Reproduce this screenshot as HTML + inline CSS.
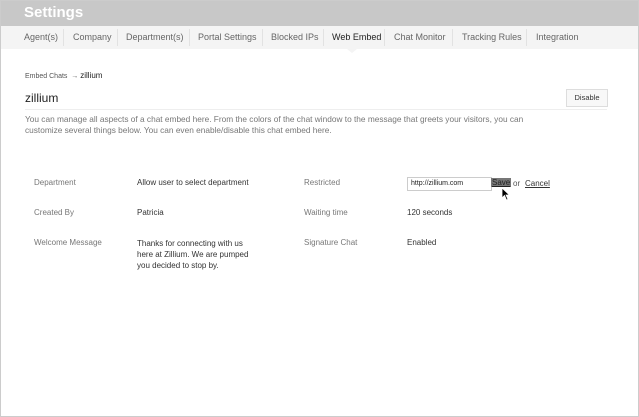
<!DOCTYPE html>
<html><head><style>
body{margin:0;width:639px;height:417px;overflow:hidden;background:#fff;font-family:"Liberation Sans",sans-serif;position:relative}
.frame{position:absolute;left:0;top:0;width:637px;height:415px;border:1px solid #ccc}
.hdr{position:absolute;left:0;top:0;width:639px;height:26px;background:#c8c8c8}
.hdr span{position:absolute;left:24px;top:4px;color:#fff;font-size:15px;font-weight:bold}
.tabs{position:absolute;left:0;top:26px;width:639px;height:23px;background:#f4f4f4}
.tabs span{position:absolute;top:6px;font-size:9px;color:#666}
.sep{position:absolute;top:3px;width:1px;height:17px;background:#e2e2e2}
.t{position:absolute;font-size:8px;color:#777}
.v{position:absolute;font-size:8px;color:#333}
</style></head><body>
<div class="hdr"><span>Settings</span></div>
<div class="tabs">
<span style="left:24px">Agent(s)</span><div class="sep" style="left:63px"></div>
<span style="left:73px">Company</span><div class="sep" style="left:117px"></div>
<span style="left:126px">Department(s)</span><div class="sep" style="left:189px"></div>
<span style="left:198px">Portal Settings</span><div class="sep" style="left:262px"></div>
<span style="left:271px">Blocked IPs</span><div class="sep" style="left:323px"></div>
<span style="left:332px;color:#222">Web Embed</span><div class="sep" style="left:384px"></div>
<span style="left:394px">Chat Monitor</span><div class="sep" style="left:452px"></div>
<span style="left:462px">Tracking Rules</span><div class="sep" style="left:526px"></div>
<span style="left:536px">Integration</span>
</div>
<div style="position:absolute;left:347px;top:49px;width:0;height:0;border-left:5px solid transparent;border-right:5px solid transparent;border-top:4px solid #f4f4f4"></div>
<div style="position:absolute;left:25px;top:71px;font-size:7px;color:#555">Embed Chats &nbsp;→ <span style="font-size:8px;color:#222">zillium</span></div>
<div style="position:absolute;left:25px;top:91px;font-size:12px;color:#222">zillium</div>
<div style="position:absolute;left:566px;top:89px;width:40px;height:16px;border:1px solid #ddd;background:#f8f8f8;font-size:7.5px;color:#333;text-align:center;line-height:16px">Disable</div>
<div style="position:absolute;left:25px;top:109px;width:582px;height:1px;background:#eee"></div>
<div style="position:absolute;left:25px;top:114px;font-size:8.3px;color:#777;line-height:11px">You can manage all aspects of a chat embed here. From the colors of the chat window to the message that greets your visitors, you can<br>customize several things below. You can even enable/disable this chat embed here.</div>
<div class="t" style="left:34px;top:178px">Department</div>
<div class="v" style="left:137px;top:178px">Allow user to select department</div>
<div class="t" style="left:34px;top:208px">Created By</div>
<div class="v" style="left:137px;top:208px">Patricia</div>
<div class="t" style="left:34px;top:238px">Welcome Message</div>
<div class="v" style="left:137px;top:238px;line-height:11px">Thanks for connecting with us<br>here at Zillium. We are pumped<br>you decided to stop by.</div>
<div class="t" style="left:304px;top:178px">Restricted</div>
<div style="position:absolute;left:407px;top:177px;width:80px;height:12px;border:1px solid #ccc;font-size:7px;color:#222;line-height:12px;padding-left:3px">http://zillium.com</div>
<div style="position:absolute;left:491px;top:178px;font-size:8px;color:#222;background:#777;text-decoration:underline;padding:0 1px">Save</div>
<div style="position:absolute;left:513px;top:179px;font-size:8px;color:#555">or</div>
<div style="position:absolute;left:525px;top:179px;font-size:8px;color:#333;text-decoration:underline">Cancel</div>
<svg style="position:absolute;left:501px;top:187px" width="10" height="14"><path d="M1 1 L1 11 L3.5 8.5 L5.5 13 L7 12.3 L5 8 L8.5 8 Z" fill="#000" stroke="#fff" stroke-width="0.8"/></svg>
<div class="t" style="left:304px;top:208px">Waiting time</div>
<div class="v" style="left:407px;top:208px">120 seconds</div>
<div class="t" style="left:304px;top:238px">Signature Chat</div>
<div class="v" style="left:407px;top:238px">Enabled</div>
<div class="frame"></div>
</body></html>
